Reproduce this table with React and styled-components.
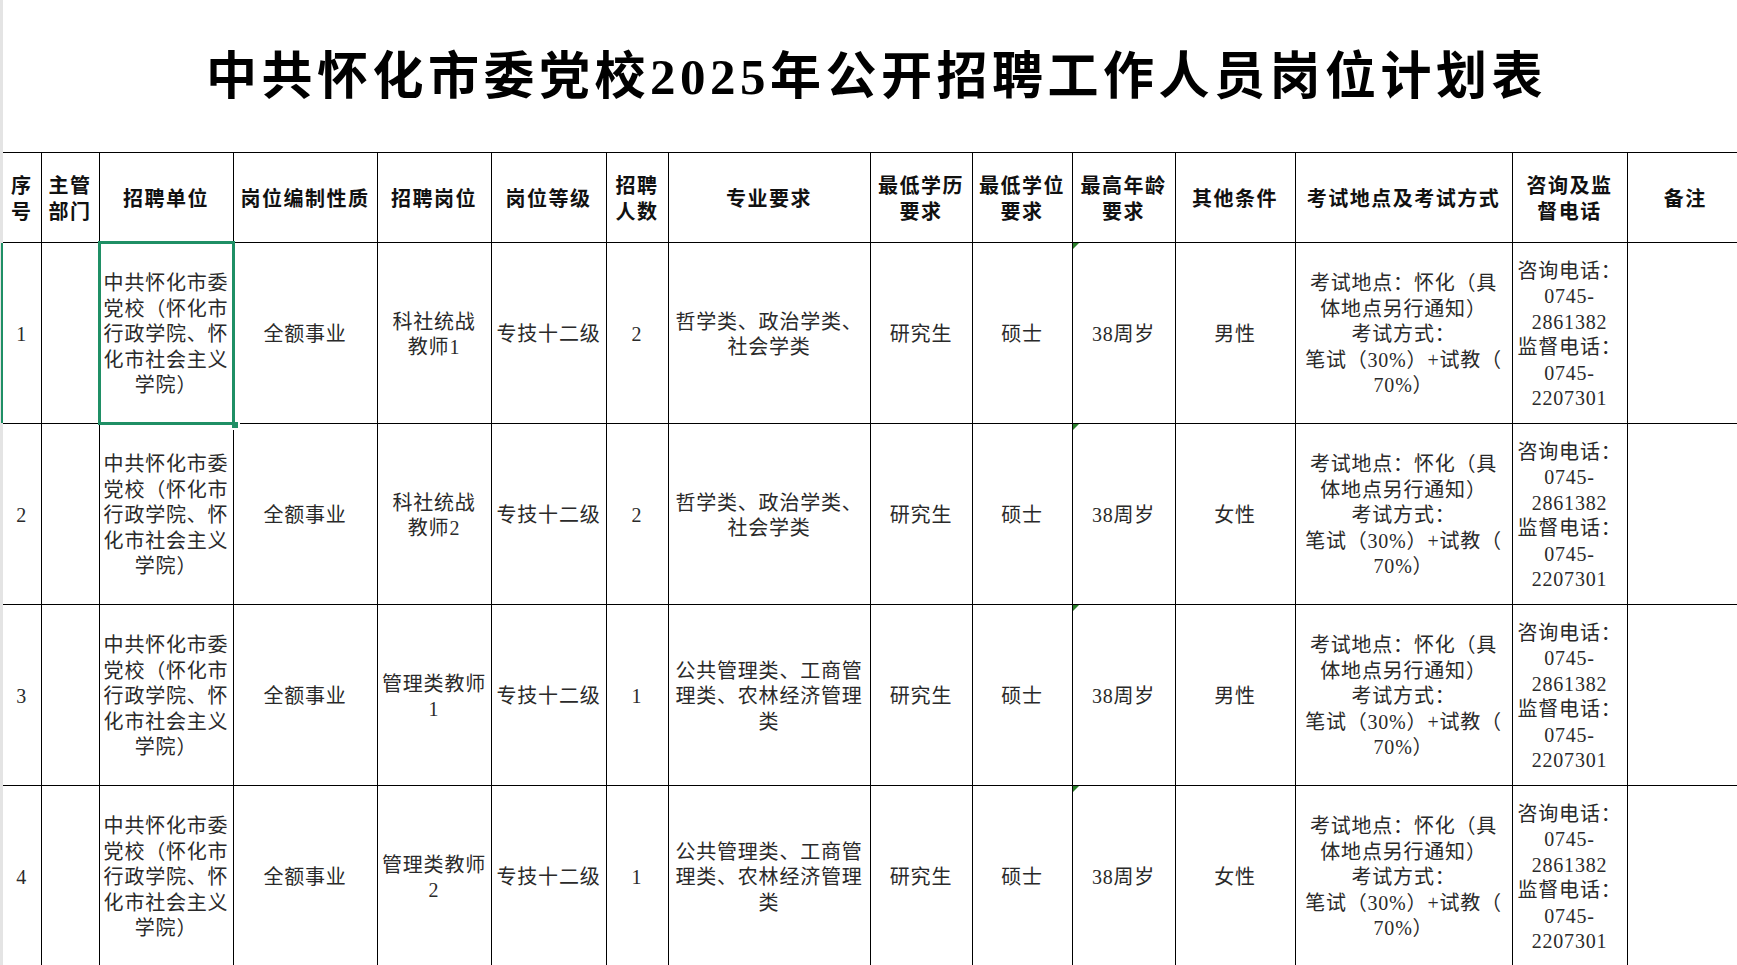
import React from "react";
import styled, { createGlobalStyle, css } from "styled-components";

const GlobalStyle = createGlobalStyle`
  html, body {
    margin: 0;
    padding: 0;
    background: #fff;
    overflow: hidden;
  }
  body {
    font-family: "Liberation Serif", "Noto Sans CJK SC", serif;
  }
`;

const green = "#1f8f65";

const Page = styled.div`
  width: 1740px;
  border-left: 3px solid #e4e4e4;
  min-height: 965px;
`;

const Title = styled.h1`
  margin: 0;
  height: 152px;
  padding: 0 0 9px 13px;
  display: flex;
  align-items: center;
  justify-content: center;
  font-family: "Liberation Serif", "Noto Sans CJK SC", serif;
  font-size: 51px;
  font-weight: 700;
  letter-spacing: 4.5px;
  color: #000;
  width: 1734px;
  box-sizing: border-box;
`;

const Sheet = styled.table`
  table-layout: fixed;
  border-collapse: collapse;
  width: 1740px;
`;

const Col = styled.col`
  width: ${(p) => p.$w}px;
`;

const HeadRow = styled.tr`
  height: 90px;
`;

const BodyRow = styled.tr`
  height: 181px;
`;

const cellBase = css`
  position: relative;
  border: 1px solid #000;
  padding: 4px 2px 0;
  text-align: center;
  vertical-align: middle;
  white-space: nowrap;
  &:first-child {
    border-left: none;
  }
  &:last-child {
    border-right: none;
  }
`;

const HeadCell = styled.th`
  ${cellBase}
  font-family: "Liberation Serif", "Noto Sans CJK SC", serif;
  font-size: 20px;
  font-weight: 700;
  line-height: 25.5px;
  letter-spacing: 1.5px;
  color: #111;
`;

const Cell = styled.td`
  ${cellBase}
  font-family: "Liberation Serif", "Noto Sans CJK SC", serif;
  font-size: 20px;
  font-weight: 400;
  line-height: 25.5px;
  letter-spacing: 0.8px;
  color: #2a2a2a;

  ${(p) =>
    p.$selected &&
    css`
      &::after {
        content: "";
        position: absolute;
        left: -2px;
        top: -2px;
        right: -2px;
        bottom: -2px;
        border: 3px solid ${green};
        pointer-events: none;
      }
      &::before {
        content: "";
        position: absolute;
        right: -5px;
        bottom: -5px;
        width: 6px;
        height: 6px;
        background: ${green};
        box-shadow: 1px 1px 0 1px #fff;
        z-index: 2;
      }
    `}

  ${(p) =>
    p.$flag &&
    css`
      &::before {
        content: "";
        position: absolute;
        left: 0;
        top: 0;
        width: 0;
        height: 0;
        border-top: 6px solid #2b7f2b;
        border-right: 6px solid transparent;
      }
    `}

  ${(p) =>
    p.$rowMark &&
    css`
      &::before {
        content: "";
        position: absolute;
        left: -2px;
        top: 0;
        bottom: 0;
        width: 2px;
        background: ${green};
      }
    `}
`;

function Lines({ text }) {
  const list = Array.isArray(text) ? text : [text];
  return list.map((line, i) => (
    <React.Fragment key={i}>
      {i > 0 && <br />}
      {line}
    </React.Fragment>
  ));
}

const widths = [38, 58, 134, 144, 114, 115, 62, 202, 102, 100, 103, 120, 217, 115, 116];

const headers = [
  ["序", "号"],
  ["主管", "部门"],
  "招聘单位",
  "岗位编制性质",
  "招聘岗位",
  "岗位等级",
  ["招聘", "人数"],
  "专业要求",
  ["最低学历", "要求"],
  ["最低学位", "要求"],
  ["最高年龄", "要求"],
  "其他条件",
  "考试地点及考试方式",
  ["咨询及监", "督电话"],
  "备注",
];

const unit = ["中共怀化市委", "党校（怀化市", "行政学院、怀", "化市社会主义", "学院）"];
const exam = ["考试地点：怀化（具", "体地点另行通知）", "考试方式：", "笔试（30%）+试教（", "70%）"];
const phone = ["咨询电话：", "0745-", "2861382", "监督电话：", "0745-", "2207301"];
const majorA = ["哲学类、政治学类、", "社会学类"];
const majorB = ["公共管理类、工商管", "理类、农林经济管理", "类"];

const rows = [
  { no: "1", post: ["科社统战", "教师1"], count: "2", major: majorA, sex: "男性" },
  { no: "2", post: ["科社统战", "教师2"], count: "2", major: majorA, sex: "女性" },
  { no: "3", post: ["管理类教师", "1"], count: "1", major: majorB, sex: "男性" },
  { no: "4", post: ["管理类教师", "2"], count: "1", major: majorB, sex: "女性" },
];

export default function App() {
  return (
    <>
      <GlobalStyle />
      <Page>
        <Title>中共怀化市委党校2025年公开招聘工作人员岗位计划表</Title>
        <Sheet>
          <colgroup>
            {widths.map((w, i) => (
              <Col key={i} $w={w} />
            ))}
          </colgroup>
          <thead>
            <HeadRow>
              {headers.map((h, i) => (
                <HeadCell key={i}>
                  <Lines text={h} />
                </HeadCell>
              ))}
            </HeadRow>
          </thead>
          <tbody>
            {rows.map((r, i) => (
              <BodyRow key={r.no}>
                <Cell $rowMark={i === 0}>{r.no}</Cell>
                <Cell />
                <Cell $selected={i === 0}>
                  <Lines text={unit} />
                </Cell>
                <Cell>全额事业</Cell>
                <Cell>
                  <Lines text={r.post} />
                </Cell>
                <Cell>专技十二级</Cell>
                <Cell>{r.count}</Cell>
                <Cell>
                  <Lines text={r.major} />
                </Cell>
                <Cell>研究生</Cell>
                <Cell>硕士</Cell>
                <Cell $flag>38周岁</Cell>
                <Cell>{r.sex}</Cell>
                <Cell>
                  <Lines text={exam} />
                </Cell>
                <Cell>
                  <Lines text={phone} />
                </Cell>
                <Cell />
              </BodyRow>
            ))}
          </tbody>
        </Sheet>
      </Page>
    </>
  );
}
